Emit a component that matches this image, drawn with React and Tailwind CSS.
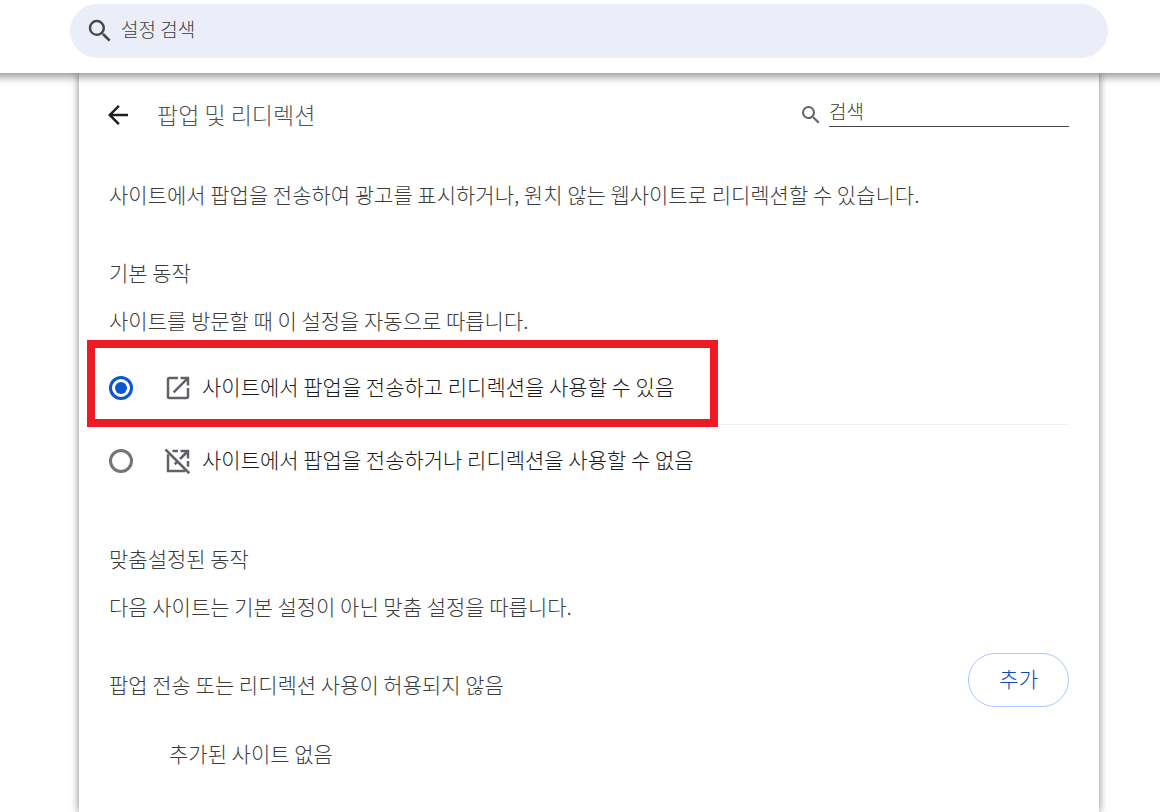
import React from 'react';

const SearchIcon = ({ className }) => (
    <svg viewBox="0 0 24 24" fill="currentColor" aria-hidden="true" className={className}>
        <path d="M15.5 14h-.79l-.28-.27A6.471 6.471 0 0 0 16 9.5 6.5 6.5 0 1 0 9.5 16c1.61 0 3.09-.59 4.23-1.57l.27.28v.79l5 4.99L20.49 19l-4.99-5zm-6 0C7.01 14 5 11.99 5 9.5S7.01 5 9.5 5 14 7.01 14 9.5 11.99 14 9.5 14z" />
    </svg>
)

const BackIcon = () => (
    <svg viewBox="0 0 24 24" fill="currentColor" aria-hidden="true" className="size-[30px]">
        <path d="M20 11H7.83l5.59-5.59L12 4l-8 8 8 8 1.41-1.41L7.83 13H20v-2z" />
    </svg>
)

const OpenIcon = () => (
    <svg viewBox="0 0 24 24" fill="currentColor" aria-hidden="true" className="size-[30px] shrink-0 text-[#5f6368]">
        <path d="M19 19H5V5h7V3H5a2 2 0 0 0-2 2v14a2 2 0 0 0 2 2h14c1.1 0 2-.9 2-2v-7h-2v7zM14 3v2h3.59l-9.83 9.83 1.41 1.41L19 6.41V10h2V3h-7z" />
    </svg>
)

const OpenOffIcon = () => (
    <svg viewBox="0 0 24 24" fill="none" stroke="currentColor" strokeWidth="2" aria-hidden="true" className="size-[30px] shrink-0 text-[#5f6368]">
        <path d="M7.5 4H12M4 6.5V20H18M20 12V16.5M14 4H20V10M20 4L13.6 10.4M11.5 12.5L9.4 14.6" />
        <path d="M2 2.8L21 21.8" />
    </svg>
)

const options = [
    { id: "allow", label: "사이트에서 팝업을 전송하고 리디렉션을 사용할 수 있음", Icon: OpenIcon },
    { id: "block", label: "사이트에서 팝업을 전송하거나 리디렉션을 사용할 수 없음", Icon: OpenOffIcon },
]

const BehaviorOption = ({ id, label, Icon, checked, highlighted }) => (
    <div className="relative border-b border-[#f0f0f0] last:border-none">
        <label htmlFor={id} className="flex h-[72px] items-center text-[#1a1a1a]">
            <input
                type="radio"
                id={id}
                name="behavior"
                defaultChecked={checked}
                className="size-6 shrink-0 appearance-none rounded-full border-3 border-[#757575] bg-clip-content p-[3px] checked:border-[#0b57d0] checked:bg-[#0b57d0]"
            />
            <span className="ml-[30px] flex items-center gap-[9px]">
                <Icon />
                <span className="pb-1">{label}</span>
            </span>
        </label>
        {highlighted && (
            <div className="pointer-events-none absolute -top-3 -left-[22px] h-[87px] w-[631px] border-8 border-[#ed1c24]" />
        )}
    </div>
)

const App = () => {
    return (
        <div className="flex min-h-screen flex-col overflow-x-hidden bg-white font-['Noto_Sans_CJK_KR',sans-serif] text-[21px] leading-[30px] font-light text-[#3c3c3c]">
            <header className="z-10 bg-white pt-1 pr-[52px] pb-[15px] pl-[70px] shadow-[0_-4px_8px_8px_rgba(0,0,0,0.4)]">
                <div className="flex h-[54px] items-center rounded-full bg-[#ebeef8] pr-6 pl-[15px]">
                    <SearchIcon className="size-[30px] shrink-0 text-[#474747]" />
                    <input
                        type="search"
                        aria-label="설정 검색"
                        placeholder="설정 검색"
                        className="ml-[6px] w-full bg-transparent pb-1 text-[19px] outline-none placeholder:text-[#3c3c3c]"
                    />
                </div>
            </header>
            <main className="mr-[61px] ml-[79px] flex-1 bg-white px-[30px] pb-10 shadow-[0_0_8px_rgba(0,0,0,0.5)]">
                <div className="flex h-[84px] items-center">
                    <button type="button" aria-label="뒤로" className="-ml-[6px] text-[#1f1f1f]">
                        <BackIcon />
                    </button>
                    <h1 className="ml-6 pb-[2px] text-[23px] text-[#505357]">팝업 및 리디렉션</h1>
                    <div className="ml-auto flex items-center gap-[6px]">
                        <SearchIcon className="size-6 text-[#5f6368]" />
                        <input
                            type="search"
                            aria-label="검색"
                            placeholder="검색"
                            className="mb-2 h-[31px] w-60 border-b border-[#474747] text-[19px] outline-none placeholder:text-[#3c3c3c]"
                        />
                    </div>
                </div>
                <p className="mt-[22px]">사이트에서 팝업을 전송하여 광고를 표시하거나, 원치 않는 웹사이트로 리디렉션할 수 있습니다.</p>

                <h2 className="mt-12">기본 동작</h2>
                <p className="mt-[18px] mb-[17px]">사이트를 방문할 때 이 설정을 자동으로 따릅니다.</p>
                <div>
                    {options.map((option, index) => (
                        <BehaviorOption key={option.id} {...option} checked={index === 0} highlighted={index === 0} />
                    ))}
                </div>

                <h2 className="mt-[46px]">맞춤설정된 동작</h2>
                <p className="mt-[18px]">다음 사이트는 기본 설정이 아닌 맞춤 설정을 따릅니다.</p>
                <div className="mt-8 flex items-start justify-between">
                    <h3 className="mt-4">팝업 전송 또는 리디렉션 사용이 허용되지 않음</h3>
                    <button type="button" className="h-[54px] rounded-full border border-[#a8c7fa] px-[30px] pb-1 text-[#0b4ab0]">
                        추가
                    </button>
                </div>
                <p className="mt-[31px] ml-[60px]">추가된 사이트 없음</p>
            </main>
        </div>
    )
}

export default App;
